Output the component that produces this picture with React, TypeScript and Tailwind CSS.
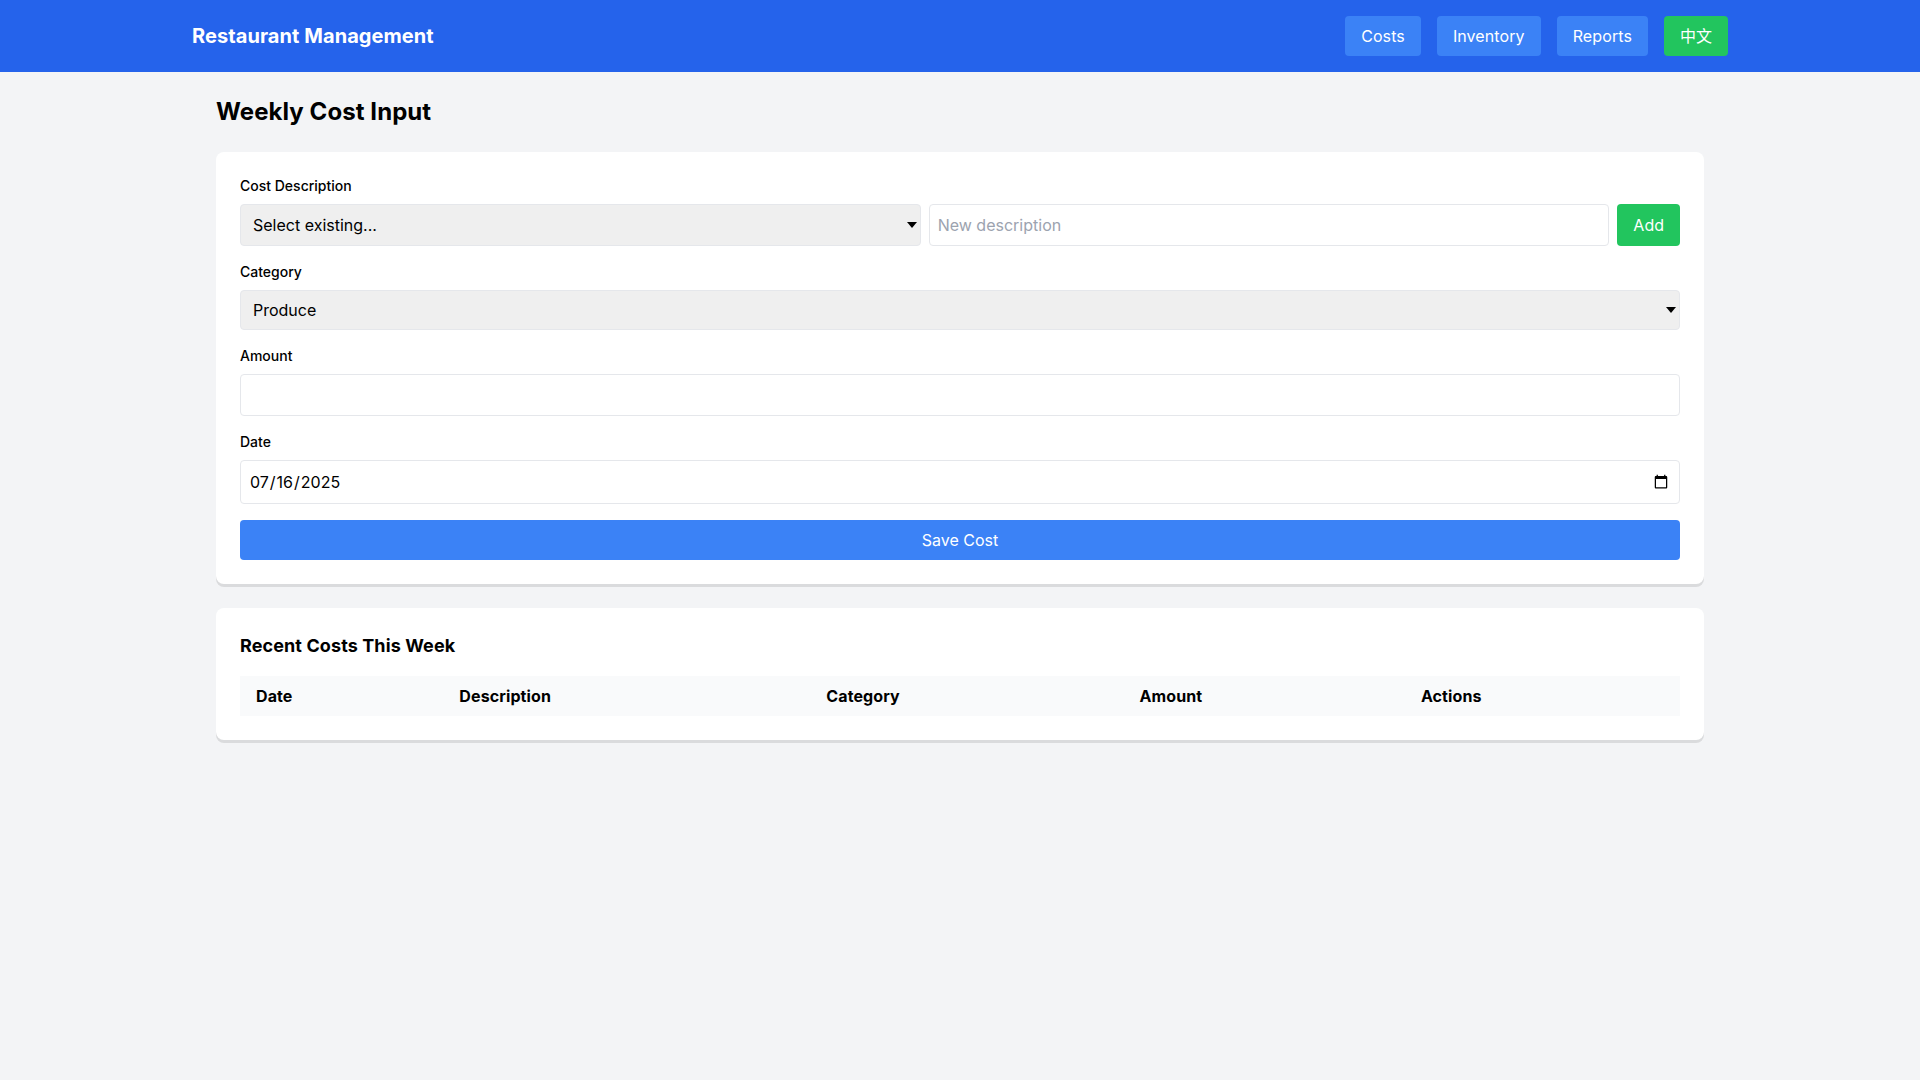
const navLinks = ["Costs", "Inventory", "Reports"];
const columns = ["Date", "Description", "Category", "Amount", "Actions"];

const labelClass = "mb-2 block text-sm font-medium";
const fieldClass = "rounded border border-[#e5e7eb] p-2";

function SelectField({ label, className, selectClass = "" }: { label: string; className: string; selectClass?: string }) {
  return (
    <div className={`relative ${className}`}>
      <select className={`${fieldClass} h-full w-full appearance-none bg-[#efefef] pl-3 ${selectClass}`}>
        <option>{label}</option>
      </select>
      <svg
        viewBox="0 0 10 6"
        className="pointer-events-none absolute top-1/2 right-[4px] h-[6px] w-[10px] -translate-y-1/2"
      >
        <path d="M0 0h10L5 6z" fill="#000" />
      </svg>
    </div>
  );
}

export default function App() {
  return (
    <div className="min-h-screen bg-[#f3f4f6] font-[Inter,'Noto_Sans_CJK_SC',sans-serif] text-black">
      <nav className="bg-[#2563eb] p-4 text-white">
        <div className="mx-auto flex w-[1536px] items-center justify-between">
          <h1 className="text-xl font-bold tracking-[0.07px]">Restaurant Management</h1>
          <div className="flex gap-4">
            {navLinks.map((link) => (
              <button key={link} type="button" className="rounded bg-[#3b82f6] px-4 py-2 tracking-[0.1px]">
                {link}
              </button>
            ))}
            <button type="button" className="rounded bg-[#22c55e] px-4 py-2">
              中文
            </button>
          </div>
        </div>
      </nav>

      <main className="mx-auto w-[1536px] p-6">
        <h2 className="mb-6 text-2xl font-bold tracking-[0.07px]">Weekly Cost Input</h2>

        <form className="mb-6 rounded-lg bg-white p-6 shadow-[0_3px_0_rgba(0,0,0,0.1)]">
          <div className="mb-4">
            <label className={labelClass}>Cost Description</label>
            <div className="grid grid-cols-[1fr_1fr_auto] gap-2">
              <SelectField label="Select existing..." className="min-w-0" />
              <input
                type="text"
                placeholder="New description"
                className={`${fieldClass} min-w-0 bg-white placeholder-[#9ca3af]`}
              />
              <button type="button" className="rounded bg-[#22c55e] px-4 py-2 text-white">
                Add
              </button>
            </div>
          </div>

          <div className="mb-4">
            <label className={labelClass}>Category</label>
            <SelectField label="Produce" className="h-10 w-full" selectClass="pt-[7px]" />
          </div>

          <div className="mb-4">
            <label className={labelClass}>Amount</label>
            <input type="number" className={`${fieldClass} w-full bg-white`} />
          </div>

          <div className="mb-4">
            <label className={labelClass}>Date</label>
            <input type="date" defaultValue="2025-07-16" className={`${fieldClass} h-11 w-full bg-white`} />
          </div>

          <button type="button" className="w-full rounded bg-[#3b82f6] py-2 text-white">
            Save Cost
          </button>
        </form>

        <section className="rounded-lg bg-white p-6 shadow-[0_3px_0_rgba(0,0,0,0.1)]">
          <h3 className="mb-4 text-lg font-bold tracking-[0.1px]">Recent Costs This Week</h3>
          <table className="w-full">
            <thead>
              <tr className="bg-[#f9fafb]">
                {columns.map((column) => (
                  <th key={column} className="px-4 py-2 text-left tracking-[0.1px]">
                    {column}
                  </th>
                ))}
              </tr>
            </thead>
            <tbody />
          </table>
        </section>
      </main>
    </div>
  );
}
